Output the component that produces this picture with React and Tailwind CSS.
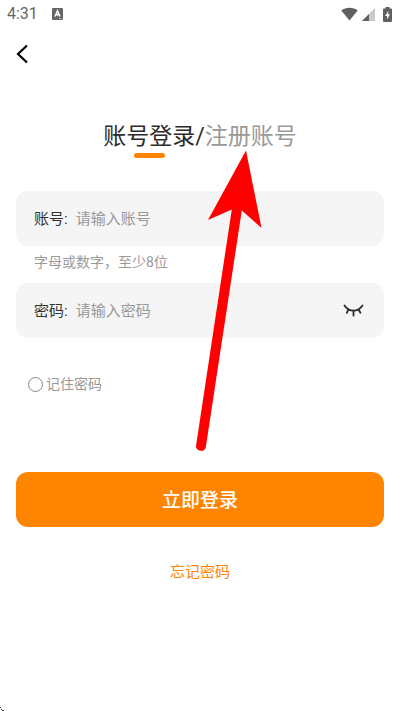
import { useState } from "react";

function StatusBar() {
  return (
    <div className="flex h-7 items-center justify-between pl-[7px] pr-2 text-[#666]">
      <div className="flex items-center gap-3.5">
        <span className="font-[Roboto,sans-serif] text-base leading-7">4:31</span>
        <svg width="11" height="12" viewBox="0 0 11 12" aria-hidden="true">
          <rect width="11" height="12" rx="1" fill="#666" />
          <path d="M3 8.5 5.5 2.8 8 8.5M4 6.7h3" fill="none" stroke="#fff" strokeWidth="1.5" />
          <path d="M7 10.5h2.5" stroke="#bbb" strokeWidth="1" />
        </svg>
      </div>
      <div className="flex items-center gap-1">
        <svg width="17" height="14" viewBox="0 0 18 14" aria-hidden="true">
          <path d="M9 14 .3 3.2C5 -.7 13 -.7 17.7 3.2Z" fill="#5f5f5f" />
        </svg>
        <svg width="13" height="13" viewBox="0 0 13 13" aria-hidden="true">
          <path d="M13 0v13H0Z" fill="#cacaca" />
          <path d="M7 6v7H0Z" fill="#5f5f5f" />
        </svg>
        <svg className="ml-1" width="9" height="15" viewBox="0 0 9 15" aria-hidden="true">
          <path d="M2.5 0h4v1.5H8q1 0 1 1V14q0 1-1 1H1q-1 0-1-1V2.5q0-1 1-1h1.5Z" fill="#5f5f5f" />
          <path d="M5.5 3.8 2 9h2v3.5L7 7.3H5Z" fill="#fff" />
        </svg>
      </div>
    </div>
  );
}

function Field({ id, label, type, placeholder, children }) {
  return (
    <div className="flex h-[55px] items-center rounded-xl bg-[#f5f5f5] pl-[18px] pr-5 text-[15px] leading-6">
      <label htmlFor={id} className="shrink-0 text-[#333]">{label}</label>
      <input
        id={id}
        type={type}
        placeholder={placeholder}
        className="ml-2 min-w-0 flex-1 bg-transparent leading-6 text-[#333] outline-none placeholder:text-[#999]"
      />
      {children}
    </div>
  );
}

export default function App() {
  const [showPassword, setShowPassword] = useState(false);

  return (
    <div className="relative min-h-screen overflow-hidden bg-white font-[Roboto,'Noto_Sans_CJK_SC',sans-serif]">
      <StatusBar />

      <header className="flex h-[52px] items-center pl-4">
        <button type="button" aria-label="返回" className="flex">
          <svg width="14" height="20" viewBox="0 0 14 20" aria-hidden="true">
            <path d="M11 1.5 2 10l9 8.5" fill="none" stroke="#000" strokeWidth="2.2" />
          </svg>
        </button>
      </header>

      <main className="px-4 pt-[37px]">
        {/* Login / register switch */}
        <div className="flex justify-center text-[23px] leading-10">
          <button type="button" className="flex flex-col items-center text-[#2b2b2b]">
            账号登录
            <span className="-mt-1 h-[5px] w-[31px] rounded-full bg-[#ff8400]" />
          </button>
          <span className="text-[#2b2b2b]">/</span>
          <button type="button" className="self-start text-[#999]">注册账号</button>
        </div>

        <form className="mt-[33px]" onSubmit={e => e.preventDefault()}>
          <Field id="account" label="账号:" type="text" placeholder="请输入账号" />
          <p className="px-[18px] pt-1 pb-[9px] text-sm leading-6 text-[#999]">字母或数字，至少8位</p>
          <Field id="password" label="密码:" type={showPassword ? "text" : "password"} placeholder="请输入密码">
            <button type="button" aria-label="显示密码" onClick={() => setShowPassword(s => !s)}>
              <svg width="21" height="13" viewBox="0 0 21 13" fill="none" stroke="#2b2b2b" strokeWidth="1.8" strokeLinecap="round" aria-hidden="true">
                <path d="M1.5 1.5C6 8.3 15 8.3 19.5 1.5M5.5 5.5 3.8 8.8M10.5 6.8v4.7M15.5 5.5l1.9 3.3" />
              </svg>
            </button>
          </Field>

          <label className="mt-[34px] flex w-fit items-center gap-[3px] pl-3 text-sm leading-6 text-[#999]">
            <input type="checkbox" className="size-[15px] appearance-none rounded-full border border-[#888] checked:border-4 checked:border-[#ff8400]" />
            记住密码
          </label>

          <button type="submit" className="mt-[76px] h-[55px] w-full rounded-xl bg-[#ff8400] pt-1 text-[19px] font-medium text-white">
            立即登录
          </button>
        </form>

        <div className="mt-[33px] text-center text-[15px] leading-6">
          <a href="#forgot" className="text-[#ff8400]">忘记密码</a>
        </div>
      </main>

      {/* Pointer to the register tab */}
      <svg className="pointer-events-none absolute left-[195px] top-[150px]" width="68" height="303" viewBox="0 0 68 303" aria-hidden="true">
        <path d="M51 .5 66.5 78 46.8 60.5 10.8 297.2A5 5 0 0 1 1 296L36.8 59.5 13 70Z" fill="#f00" />
      </svg>
      <svg className="pointer-events-none absolute bottom-0 left-0" width="4" height="4" viewBox="0 0 4 4" aria-hidden="true">
        <path d="M0 0h1v1H0ZM1 2h1v1H1ZM2 3h2v1H2Z" fill="#444" />
      </svg>
    </div>
  );
}
